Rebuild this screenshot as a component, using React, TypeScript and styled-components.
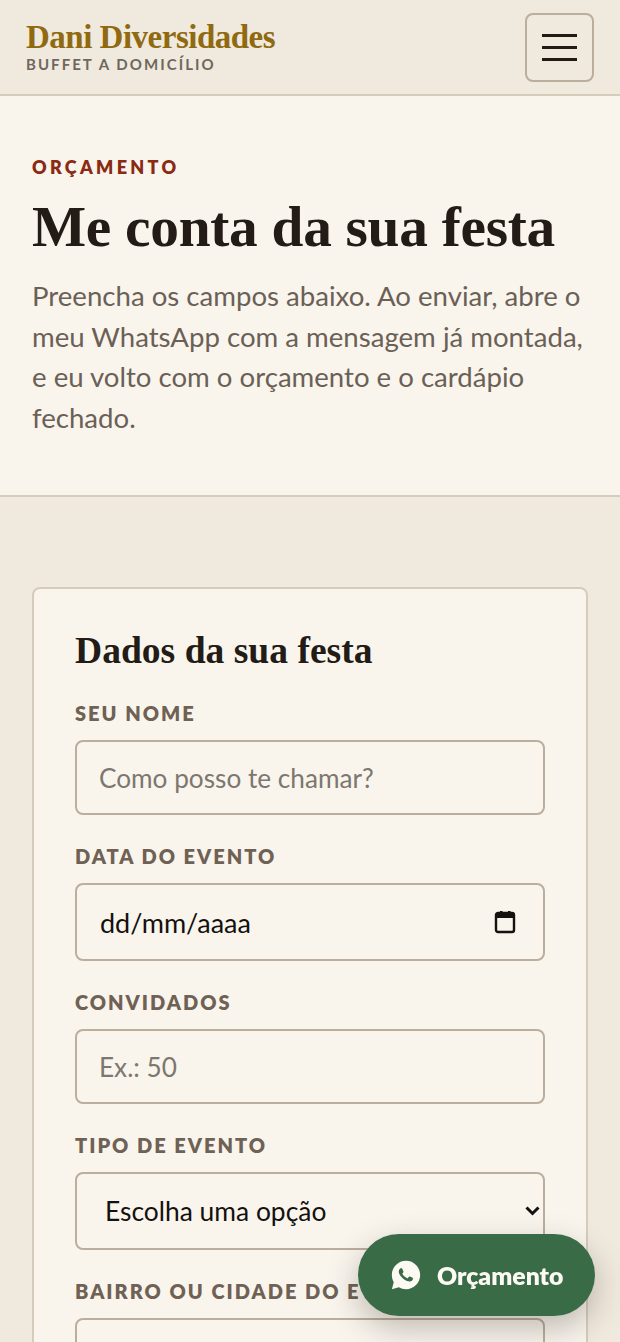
import React from 'react'
import styled, { createGlobalStyle } from 'styled-components'
import { RiWhatsappFill } from 'react-icons/ri'

const SERIF = '"Liberation Serif", "DejaVu Serif", serif'
const SANS = 'Lato, "Open Sans", sans-serif'

const GlobalStyle = createGlobalStyle`
  html, body {
    margin: 0;
    height: 100%;
    overflow: hidden;
    background: #f0e9de;
  }
  * { box-sizing: border-box; }
`

const Page = styled.div`
  height: 1342px;
  overflow: hidden;
  font-family: ${SANS};
  background: #f0e9de;
`

const Header = styled.header`
  display: flex;
  align-items: center;
  justify-content: space-between;
  height: 96px;
  padding: 0 26px;
  background: #f0e9de;
  border-bottom: 2px solid #d6ccbc;
`

const Brand = styled.div`
  display: flex;
  flex-direction: column;
  padding-bottom: 3px;
`

const BrandName = styled.div`
  font-family: ${SERIF};
  font-weight: 700;
  font-size: 33px;
  line-height: 38px;
  letter-spacing: -0.5px;
  color: #8f6a10;
`

const BrandTag = styled.div`
  margin-top: -1px;
  font-size: 15px;
  line-height: 18px;
  font-weight: 700;
  letter-spacing: 2.05px;
  color: #6f675e;
`

const MenuButton = styled.button`
  display: flex;
  flex-direction: column;
  align-items: center;
  justify-content: center;
  gap: 9px;
  width: 69px;
  height: 69px;
  margin-top: 1px;
  padding: 0;
  background: transparent;
  border: 2px solid #bbae9c;
  border-radius: 8px;
`

const MenuBar = styled.span`
  display: block;
  width: 35px;
  height: 3px;
  background: #211a15;
`

const Hero = styled.section`
  height: 401px;
  padding: 58px 32px 0;
  background: #f9f5ed;
  border-bottom: 2px solid #d6ccbc;
`

const Eyebrow = styled.div`
  font-size: 18px;
  line-height: 26px;
  font-weight: 800;
  letter-spacing: 3.3px;
  color: #8a2a12;
`

const Title = styled.h1`
  margin: 13px 0 0;
  font-family: ${SERIF};
  font-weight: 700;
  font-size: 57.4px;
  line-height: 68px;
  letter-spacing: -0.3px;
  color: #231b16;
`

const Lead = styled.p`
  margin: 15px 0 0;
  font-size: 27.6px;
  line-height: 40.6px;
  color: #6b6055;
`

const Content = styled.main`
  padding: 90px 32px 0;
`

const Card = styled.section`
  padding: 40px 41px;
  background: #f9f5ed;
  border: 2px solid #d6ccbc;
  border-radius: 8px;
`

const CardTitle = styled.h2`
  margin: 0 0 27px;
  font-family: ${SERIF};
  font-weight: 700;
  font-size: 37.6px;
  line-height: 44px;
  color: #231b16;
`

const Field = styled.div`
  display: flex;
  flex-direction: column;
  gap: 14px;
  margin-bottom: 28px;
`

const Label = styled.label`
  font-size: 20px;
  line-height: 26px;
  font-weight: 800;
  letter-spacing: 2px;
  color: #6f6154;
`

const Input = styled.input`
  width: 100%;
  height: 75px;
  padding: 0 22px;
  font-family: ${SANS};
  font-size: 26.2px;
  color: #231b16;
  background: #f9f5ed;
  border: 2px solid #bbae9c;
  border-radius: 8px;
  &::placeholder { color: #7d7770; opacity: 1; }
`

const DateBox = styled.div`
  display: flex;
  align-items: center;
  justify-content: space-between;
  height: 78px;
  padding: 0 27px 0 23px;
  font-size: 27px;
  color: #14110f;
  background: #f9f5ed;
  border: 2px solid #bbae9c;
  border-radius: 8px;
`

const SelectWrap = styled.div`
  position: relative;
`

const Select = styled.select`
  display: block;
  width: 100%;
  height: 78px;
  padding: 0 28px;
  appearance: none;
  font-family: ${SANS};
  font-size: 26.4px;
  color: #14110f;
  background: #f9f5ed;
  border: 2px solid #bbae9c;
  border-radius: 8px;
`

const SelectArrow = styled.svg`
  position: absolute;
  top: 34px;
  right: 5px;
  pointer-events: none;
`

const FloatButton = styled.a`
  position: fixed;
  left: 358px;
  top: 1234px;
  display: flex;
  align-items: center;
  gap: 14px;
  width: 237px;
  height: 82px;
  padding-left: 31px;
  font-size: 24.8px;
  font-weight: 800;
  color: #fdfaf4;
  background: #3a6b47;
  border-radius: 41px;
  box-shadow: 0 12px 32px rgba(40, 30, 20, 0.28);
`

const CalendarIcon = () => (
  <svg width="22" height="24" viewBox="0 0 22 24" fill="none">
    <rect x="6" y="1" width="2.5" height="4" fill="#14110f" />
    <rect x="14" y="1" width="2.5" height="4" fill="#14110f" />
    <rect x="2" y="3" width="18" height="19" rx="2" stroke="#14110f" strokeWidth="2.4" />
    <rect x="2" y="3" width="18" height="5" fill="#14110f" />
  </svg>
)

export default function App() {
  return (
    <Page>
      <GlobalStyle />
      <Header>
        <Brand>
          <BrandName>Dani Diversidades</BrandName>
          <BrandTag>BUFFET A DOMICÍLIO</BrandTag>
        </Brand>
        <MenuButton aria-label="Menu">
          <MenuBar />
          <MenuBar />
          <MenuBar />
        </MenuButton>
      </Header>
      <Hero>
        <Eyebrow>ORÇAMENTO</Eyebrow>
        <Title>Me conta da sua festa</Title>
        <Lead>
          Preencha os campos abaixo. Ao enviar, abre o meu WhatsApp com a mensagem já montada, e eu
          volto com o orçamento e o cardápio fechado.
        </Lead>
      </Hero>
      <Content>
        <Card>
          <CardTitle>Dados da sua festa</CardTitle>
          <Field>
            <Label>SEU NOME</Label>
            <Input placeholder="Como posso te chamar?" />
          </Field>
          <Field>
            <Label>DATA DO EVENTO</Label>
            <DateBox>
              dd/mm/aaaa
              <CalendarIcon />
            </DateBox>
          </Field>
          <Field>
            <Label>CONVIDADOS</Label>
            <Input placeholder="Ex.: 50" />
          </Field>
          <Field>
            <Label>TIPO DE EVENTO</Label>
            <SelectWrap>
              <Select defaultValue="">
                <option value="">Escolha uma opção</option>
              </Select>
              <SelectArrow width="15" height="10" viewBox="0 0 15 10" fill="none">
                <path d="M1.5 1.5 L7.5 7.5 L13.5 1.5" stroke="#14110f" strokeWidth="3" />
              </SelectArrow>
            </SelectWrap>
          </Field>
          <Field>
            <Label>BAIRRO OU CIDADE DO EVENTO</Label>
            <Input />
          </Field>
        </Card>
      </Content>
      <FloatButton>
        <RiWhatsappFill size={34} />
        Orçamento
      </FloatButton>
    </Page>
  )
}
